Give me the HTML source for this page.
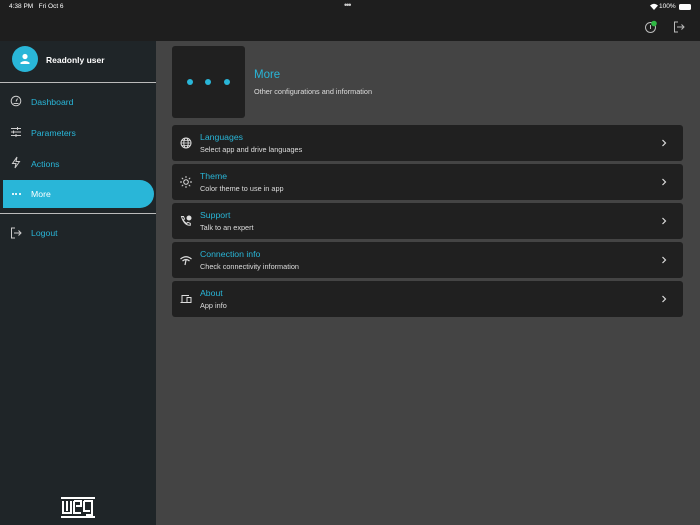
<!DOCTYPE html>
<html><head><style>
*{margin:0;padding:0;box-sizing:border-box}
body{width:700px;height:525px;background:#444;font-family:"Liberation Sans",sans-serif;position:relative;overflow:hidden}
.top{position:absolute;left:0;top:0;width:700px;height:41px;background:#1e1e1e}
.side{position:absolute;left:0;top:41px;width:156px;height:484px;background:#1f2528}
.t{position:absolute;white-space:nowrap}
.nav{position:absolute;left:31px;font-size:8.7px;color:#29b6d8}
.ic{position:absolute}
.card{position:absolute;left:172px;width:511px;height:36px;background:#202020;border-radius:3px}
.card .h{position:absolute;left:28px;top:7px;font-size:8.7px;color:#29b6d8}
.card .s{position:absolute;left:28px;top:20px;font-size:7.3px;color:#ddd}
.card svg.i{position:absolute;left:8px;top:12px}
.card .ch{position:absolute;right:16px;top:14px}
</style></head><body>
<div class="top"></div>
<div class="t" style="left:9px;top:3px;font-size:6.5px;color:#fff">4:38 PM&nbsp;&nbsp; Fri Oct 6</div>
<div class="t" style="left:344px;top:0px;font-size:9px;color:#ccc;letter-spacing:-1px">•••</div>
<div class="t" style="left:659px;top:3px;font-size:6.5px;color:#fff">100%</div>
<svg class="ic" style="left:650px;top:3px" width="8" height="7" viewBox="0 0 8 7"><path d="M0 2.5Q4 -1 8 2.5L4 7Z" fill="#fff"/></svg>
<div class="ic" style="left:679px;top:4px;width:12px;height:6px;border:1px solid #fff;border-radius:1.5px;background:#fff"></div>
<svg class="ic" style="left:644px;top:20px" width="14" height="14" viewBox="0 0 14 14"><circle cx="6.5" cy="7.5" r="5" fill="none" stroke="#bbb" stroke-width="1"/><path d="M6.5 5v4" stroke="#bbb"/><circle cx="10" cy="3.5" r="2.8" fill="#2fb844"/></svg>
<svg class="ic" style="left:673px;top:21px" width="12" height="12" viewBox="0 0 12 12"><path d="M5 1H1.5v10H5M4 6h7M8.5 3.5L11 6 8.5 8.5" fill="none" stroke="#bbb" stroke-width="1"/></svg>
<div class="side"></div>
<div class="ic" style="left:12px;top:46px;width:26px;height:26px;border-radius:50%;background:#29b6d8"></div>
<svg class="ic" style="left:18px;top:52px" width="14" height="14" viewBox="0 0 14 14"><circle cx="7" cy="4.5" r="2.6" fill="#fff"/><path d="M2.5 12v-1.5Q7 7.5 11.5 10.5V12Z" fill="#fff"/></svg>
<div class="t" style="left:46px;top:55px;font-size:8.5px;color:#fff;font-weight:bold">Readonly user</div>
<div class="ic" style="left:0;top:82px;width:156px;height:1px;background:#bbb"></div>
<svg class="ic" style="left:10px;top:95px" width="12" height="12" viewBox="0 0 12 12"><circle cx="6" cy="6" r="4.8" fill="none" stroke="#ccc"/><path d="M6 6.5L7.5 3.5M3.5 8.5h5" stroke="#ccc"/></svg>
<div class="nav" style="top:97px">Dashboard</div>
<svg class="ic" style="left:10px;top:126px" width="12" height="12" viewBox="0 0 12 12"><path d="M1 2.5h10M1 6h10M1 9.5h10M7.5 1v3M3.5 4.5v3M6 8v3" stroke="#ccc"/></svg>
<div class="nav" style="top:128px">Parameters</div>
<svg class="ic" style="left:10px;top:156px" width="12" height="13" viewBox="0 0 12 13"><path d="M7 1L2.5 7.5h3.5L5 12 9.5 5.5H6Z" fill="none" stroke="#ccc"/></svg>
<div class="nav" style="top:159px">Actions</div>
<div class="ic" style="left:3px;top:180px;width:151px;height:28px;background:#29b6d8;border-radius:0 14px 14px 0"></div>
<div class="ic" style="left:12px;top:193px;width:2px;height:2px;background:#e0f4fa"></div>
<div class="ic" style="left:15px;top:193px;width:2px;height:2px;background:#e0f4fa"></div>
<div class="ic" style="left:19px;top:193px;width:2px;height:2px;background:#e0f4fa"></div>
<div class="nav" style="top:189px;color:#fff">More</div>
<div class="ic" style="left:0;top:213px;width:156px;height:1px;background:#bbb"></div>
<svg class="ic" style="left:10px;top:227px" width="12" height="12" viewBox="0 0 12 12"><path d="M5 1H1.5v10H5M4 6h7M8.5 3.5L11 6 8.5 8.5" fill="none" stroke="#ccc"/></svg>
<div class="nav" style="top:228px">Logout</div>
<svg class="ic" style="left:61px;top:497px" width="34" height="22" viewBox="0 0 34 22"><rect x="0" y="0" width="34" height="2" fill="#fff"/><rect x="0" y="19" width="34" height="2" fill="#fff"/><path d="M2 4v12h8V4M6 4v10M13 4h7v5h-5M13 4v12h7M23 4h8v14h-6M23 4v10h6" fill="none" stroke="#fff" stroke-width="2"/></svg>
<div class="ic" style="left:172px;top:46px;width:73px;height:72px;background:#202020;border-radius:3px"></div>
<div class="ic" style="left:187px;top:79px;width:6px;height:6px;border-radius:50%;background:#29b6d8"></div>
<div class="ic" style="left:205px;top:79px;width:6px;height:6px;border-radius:50%;background:#29b6d8"></div>
<div class="ic" style="left:224px;top:79px;width:6px;height:6px;border-radius:50%;background:#29b6d8"></div>
<div class="t" style="left:254px;top:69px;font-size:11.5px;color:#29b6d8">More</div>
<div class="t" style="left:254px;top:87px;font-size:7.3px;color:#ddd">Other configurations and information</div>
<div class="card" style="top:125px"><svg class="i" width="12" height="12" viewBox="0 0 12 12"><circle cx="6" cy="6" r="5" fill="none" stroke="#ddd"/><ellipse cx="6" cy="6" rx="2.2" ry="5" fill="none" stroke="#ddd"/><path d="M1 6h10M1.8 3.5h8.4M1.8 8.5h8.4" stroke="#ddd" stroke-width=".8"/></svg><div class="h">Languages</div><div class="s">Select app and drive languages</div><svg class="ch" width="6" height="8" viewBox="0 0 6 8"><path d="M1.5 1l3 3-3 3" fill="none" stroke="#ddd" stroke-width="1.2"/></svg></div>
<div class="card" style="top:164px"><svg class="i" width="12" height="12" viewBox="0 0 12 12"><circle cx="6" cy="6" r="2.3" fill="none" stroke="#ddd"/><path d="M6 0v2M6 10v2M0 6h2M10 6h2M1.8 1.8l1.4 1.4M8.8 8.8l1.4 1.4M1.8 10.2l1.4-1.4M8.8 3.2l1.4-1.4" stroke="#ddd" stroke-width=".9"/></svg><div class="h">Theme</div><div class="s">Color theme to use in app</div><svg class="ch" width="6" height="8" viewBox="0 0 6 8"><path d="M1.5 1l3 3-3 3" fill="none" stroke="#ddd" stroke-width="1.2"/></svg></div>
<div class="card" style="top:203px"><svg class="i" width="12" height="12" viewBox="0 0 12 12"><path d="M1.5 1.5l2 0 1 2.5-1.2 1q1 2.3 3.5 3.5l1-1.2 2.5 1v2Q4 10.5 1.5 1.5Z" fill="none" stroke="#ddd"/><circle cx="9" cy="3" r="2.5" fill="#ddd"/></svg><div class="h">Support</div><div class="s">Talk to an expert</div><svg class="ch" width="6" height="8" viewBox="0 0 6 8"><path d="M1.5 1l3 3-3 3" fill="none" stroke="#ddd" stroke-width="1.2"/></svg></div>
<div class="card" style="top:242px"><svg class="i" width="12" height="12" viewBox="0 0 12 12"><path d="M0.5 5Q6 0.5 11.5 5M2.5 7Q6 4 9.5 7M6 6L5 11" fill="none" stroke="#ddd" stroke-width="1.2"/></svg><div class="h">Connection info</div><div class="s">Check connectivity information</div><svg class="ch" width="6" height="8" viewBox="0 0 6 8"><path d="M1.5 1l3 3-3 3" fill="none" stroke="#ddd" stroke-width="1.2"/></svg></div>
<div class="card" style="top:281px"><svg class="i" width="12" height="12" viewBox="0 0 12 12"><path d="M2 9V2.5h7M0.5 9.5h6M7 4.5h4v5H7Z" fill="none" stroke="#ddd"/></svg><div class="h">About</div><div class="s">App info</div><svg class="ch" width="6" height="8" viewBox="0 0 6 8"><path d="M1.5 1l3 3-3 3" fill="none" stroke="#ddd" stroke-width="1.2"/></svg></div>
</body></html>
